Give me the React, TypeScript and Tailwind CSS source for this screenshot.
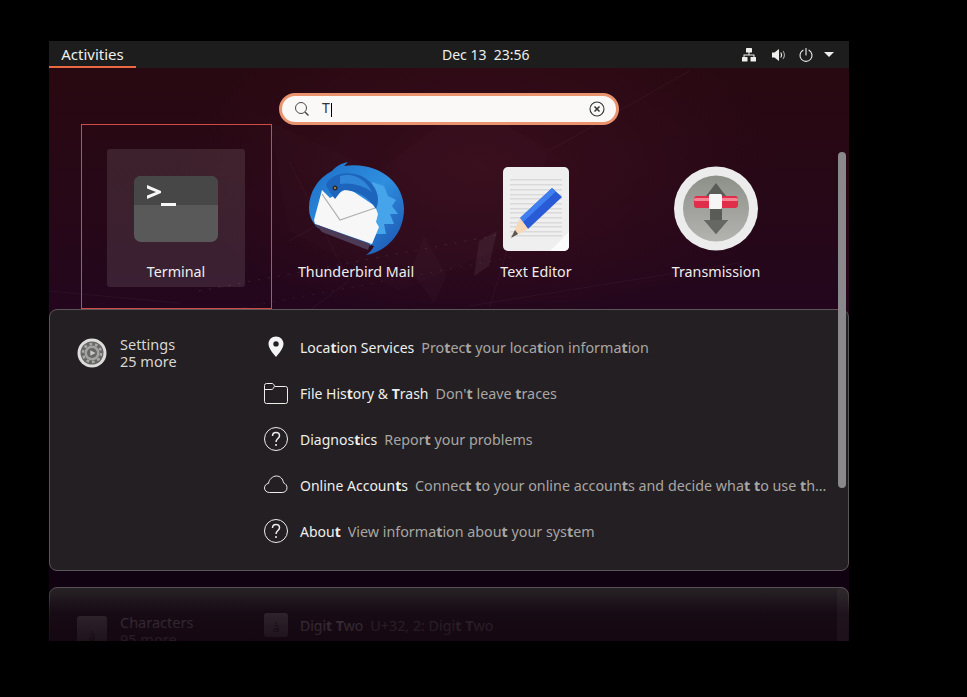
import React from "react";

const FONT = "font-['Noto_Sans','Open_Sans',sans-serif]";

// bolds the search term inside a result, as the shell does
const highlight = (text: string) =>
  text.split(/([tT])/).map((part, i) =>
    /^[tT]$/.test(part) ? (
      <b key={i} className="font-bold">
        {part}
      </b>
    ) : (
      part
    )
  );

const Wallpaper = () => (
  <svg className="absolute inset-0" width="800" height="600" viewBox="0 0 800 600" fill="none">
    <path d="M220 80 L330 130 L420 60 L500 110 L470 200 L350 250 L240 190 Z" fill="#ffffff" fillOpacity="0.012" />
    <path d="M375 195 L398 235 L385 262 L362 230 Z" fill="#ffffff" fillOpacity="0.018" />
    <path d="M430 200 L448 190 L440 225 L425 235 Z" fill="#ffffff" fillOpacity="0.06" />
    <g stroke="#ffffff" strokeOpacity="0.04">
      <path d="M0 250 L130 262 M240 120 L300 240 L260 270 M470 170 L440 268 M420 265 L690 222 M500 110 L640 30 M330 150 L240 200" />
    </g>
    <path d="M150 250 L470 190" stroke="#ffffff" strokeOpacity="0.1" strokeDasharray="2 8" />
    <path d="M165 272 L470 215" stroke="#ffffff" strokeOpacity="0.07" strokeDasharray="2 8" />
  </svg>
);

const NetworkIcon = () => (
  <svg width="16" height="16" viewBox="0 0 16 16" fill="#eeeeec">
    <rect x="5" y="1" width="6" height="4.500" rx="0.500" />
    <rect x="1" y="10" width="5.500" height="4.500" rx="0.500" />
    <rect x="9.500" y="10" width="5.500" height="4.500" rx="0.500" />
    <path d="M7.500 5h1v2.500h5V11h-1V8.500h-9V11h-1V7.500h5z" />
  </svg>
);

const VolumeIcon = () => (
  <svg width="16" height="16" viewBox="0 0 16 16" fill="none">
    <path d="M1 5.500h2.500L8 2v12l-4.500-3.500H1z" fill="#eeeeec" />
    <path d="M10 6c.8 1.300.8 2.700 0 4" stroke="#eeeeec" strokeWidth="1.200" strokeLinecap="round" />
    <path d="M12.300 4.500c1.500 2.200 1.500 4.800 0 7" stroke="#eeeeec" strokeOpacity="0.6" strokeWidth="1.200" strokeLinecap="round" />
  </svg>
);

const PowerIcon = () => (
  <svg width="16" height="16" viewBox="0 0 16 16" fill="none" stroke="#eeeeec" strokeWidth="1.100" strokeLinecap="round">
    <path d="M8 1.500v6.500" />
    <path d="M5 3.200a6 6 0 1 0 6 0" />
  </svg>
);

const TerminalIcon = () => (
  <svg width="96" height="96" viewBox="0 0 96 96">
    <rect x="6" y="14" width="84" height="66" rx="7" fill="#595959" />
    <path d="M6 21a7 7 0 0 1 7-7h70a7 7 0 0 1 7 7v22H6z" fill="#474747" />
    <path d="M19 23 L33 29 V31 L19 37 V33.500 L28 30 L19 26.500Z" fill="#f7f7f7" />
    <rect x="33" y="41" width="15" height="3" fill="#f7f7f7" />
  </svg>
);

const ThunderbirdIcon = () => (
  <svg width="96" height="96" viewBox="0 0 96 96">
    <defs>
      <linearGradient id="tb" x1="0" y1="0" x2="1" y2="1">
        <stop offset="0" stopColor="#1c6cc6" />
        <stop offset="0.5" stopColor="#2f8fdf" />
        <stop offset="1" stopColor="#1a50ad" />
      </linearGradient>
    </defs>
    {/* ring, open at the lower left */}
    <path
      d="M24 9 C28 4 34 1 40 0 C38 2 37 3 36 4 C70 -1 96 20 96 47 C96 72 78 90 58 93 C62 90 64 88 66 84 L10 66 C4 60 1 54 1 46 C1 30 10 16 24 9Z"
      fill="url(#tb)"
    />
    {/* jagged feathers */}
    <path
      d="M64 20 L76 24 L80 34 L88 38 L84 44 L90 52 L82 52 L86 62 L76 62 L78 72 L68 72 L62 84 L56 70 L66 46Z"
      fill="#46a5ea"
    />
    {/* envelope */}
    <path d="M14 28 L22 36 L40 26 L67 44 L70 52 L68 60 L71 65 L64 82 L7 62 L6 58Z" fill="#f7f7f7" />
    <path d="M14 32 L32 58 L67 46" fill="none" stroke="#b0b0b0" strokeWidth="1.300" />
    <path d="M7 62 L62 82 L60 88 L14 70Z" fill="#4d3a55" />
    {/* head and neck */}
    <path d="M18 23 C22 10 48 6 62 20 C70 28 72 38 68 47 C60 34 48 28 34 28 L27 37 C23 32 20 28 18 23Z" fill="#1d64bc" />
    <path d="M32 14 C46 10 58 18 64 30 C56 24 44 20 32 22Z" fill="#2f86d8" />
    <circle cx="27" cy="26" r="2.500" fill="#2b2b2b" />
    <circle cx="27" cy="26" r="1" fill="#b79a5a" />
  </svg>
);

const TextEditorIcon = () => (
  <svg width="96" height="96" viewBox="1 0 96 96">
    <rect x="16" y="5" width="66" height="84" rx="5" fill="#efefef" />
    <path d="M82 70 V84 a5 5 0 0 1 -5 5 H63z" fill="#fbfbfb" />
    <g fill="#dadada">
      {[17, 22, 27, 32, 36, 41, 46, 50, 55, 60, 64, 69, 73].map((y) => (
        <rect key={y} x="23" y={y} width="52" height="1.500" />
      ))}
    </g>
    <path d="M65 26 L75 35 L41 67 L33 56Z" fill="#2a5bd7" />
    <path d="M65 26 L69 29.500 L36 60 L33 56Z" fill="#3f7ff0" />
    <path d="M33 56 L41 67 L24 76 Z" fill="#f6d8b8" />
    <path d="M28 68 L31 72 L24 76Z" fill="#555555" />
  </svg>
);

const TransmissionIcon = () => (
  <svg width="96" height="96" viewBox="0 0 96 96">
    <defs>
      <linearGradient id="trg" x1="0" y1="0" x2="0" y2="1">
        <stop offset="0" stopColor="#8d8f89" />
        <stop offset="1" stopColor="#b3b4af" />
      </linearGradient>
    </defs>
    <circle cx="48" cy="46.500" r="42" fill="#ececec" />
    <circle cx="48" cy="46.500" r="33" fill="url(#trg)" />
    <path d="M48 21 L58 34 H54 V58 H60 L48 72 L36 58 H42 V34 H38Z" fill="#5a5c58" />
    <path d="M36 58 H60 L48 72Z" fill="#666864" />
    <rect x="26" y="34" width="44" height="12" rx="3" fill="#e02d49" />
    <rect x="26" y="36" width="44" height="3" rx="1.500" fill="#f28494" />
    <rect x="41" y="32" width="13" height="15" rx="1.500" fill="#f6f6f6" />
  </svg>
);

const SettingsIcon = () => (
  <svg width="30" height="30" viewBox="0 0 30 30">
    <circle cx="15" cy="15" r="14.500" fill="#dedddb" />
    <circle cx="15" cy="15" r="11.500" fill="#676765" />
    <circle cx="15" cy="15" r="9" fill="none" stroke="#a9a9a7" strokeWidth="2.500" strokeDasharray="2.800 2.850" />
    <circle cx="15" cy="15" r="7.500" fill="#a3a3a1" />
    <circle cx="15" cy="15" r="5" fill="#676765" />
    <path d="M13.300 12.300 L18.500 15 L13.300 17.700Z" fill="#c9c9c7" />
  </svg>
);

const PinIcon = () => (
  <svg width="24" height="24" viewBox="0 0 24 24">
    <path
      fillRule="evenodd"
      d="M12 1.500c-4.200 0-7.500 3.200-7.500 7.300C4.500 13.500 9 18.500 12 22c3-3.500 7.500-8.500 7.500-13.200 0-4.100-3.300-7.300-7.500-7.300zm0 4.700a2.700 2.700 0 1 1 0 5.400 2.700 2.700 0 0 1 0-5.400z"
      fill="#f4f4f4"
    />
  </svg>
);

const FolderIcon = () => (
  <svg width="24" height="24" viewBox="0 0 24 24" fill="none" stroke="#eeeeec" strokeWidth="1">
    <path d="M.5 4.500a2 2 0 0 1 2-2h5.500c1 0 1.500.5 2 1.500l.8 1.500H21.500a2 2 0 0 1 2 2V20.500a2 2 0 0 1-2 2h-19a2 2 0 0 1-2-2z" />
    <path d="M.5 8.500h6.500c1.500 0 2-.5 2.500-1.500l.8-1.500" />
  </svg>
);

const HelpIcon = () => (
  <svg width="24" height="24" viewBox="0 0 24 24" fill="none" stroke="#eeeeec" strokeWidth="1">
    <circle cx="12" cy="12" r="11.500" />
    <path d="M8.500 9c0-2 1.500-3.500 3.500-3.500s3.500 1.400 3.500 3.200c0 2.800-3.500 2.800-3.500 6.300" strokeWidth="1.500" />
    <circle cx="12" cy="18" r="1" fill="#eeeeec" stroke="none" />
  </svg>
);

const CloudIcon = () => (
  <svg width="24" height="24" viewBox="0 1 24 24" fill="none" stroke="#eeeeec" strokeWidth="1">
    <path d="M5.500 20.500C2.500 20.500.5 18.500.5 16c0-2.500 1.800-4.300 4-4.600C5 7.500 8.500 4 12.500 4c3.800 0 6.500 3 7 6.800 2 .8 3.500 2.600 3.500 5 0 2.800-2 4.700-4.800 4.700z" />
  </svg>
);

const SearchIcon = () => (
  <svg width="16" height="16" viewBox="0 0 16 16" fill="none" stroke="#4a4a4a">
    <circle cx="7" cy="7" r="5.500" strokeWidth="1" />
    <path d="M11 11l3.500 3.500" strokeWidth="1.500" />
  </svg>
);

const ClearIcon = () => (
  <svg width="16" height="16" viewBox="0 0 16 16" fill="none" stroke="#2e3436">
    <circle cx="8" cy="8" r="7" strokeWidth="1.100" />
    <path d="M5.500 5.500l5 5M10.500 5.500l-5 5" strokeWidth="1.500" />
  </svg>
);

const CharTile = ({ size }: { size: number }) => (
  <div
    className="flex items-end justify-center rounded-[3px] bg-gradient-to-b from-[#a0a0a0] to-[#8a8a8a] text-[12px] leading-[18px] text-[#444444]"
    style={{ width: size, height: size }}
  >
    à
  </div>
);

const apps = [
  { name: "Terminal", icon: <TerminalIcon /> },
  { name: "Thunderbird Mail", icon: <ThunderbirdIcon /> },
  { name: "Text Editor", icon: <TextEditorIcon /> },
  { name: "Transmission", icon: <TransmissionIcon /> },
];

const settingsRows = [
  { icon: <PinIcon />, title: "Location Services", desc: "Protect your location information" },
  { icon: <FolderIcon />, title: "File History & Trash", desc: "Don't leave traces" },
  { icon: <HelpIcon />, title: "Diagnostics", desc: "Report your problems" },
  { icon: <CloudIcon />, title: "Online Accounts", desc: "Connect to your online accounts and decide what to use them for" },
  { icon: <HelpIcon />, title: "About", desc: "View information about your system" },
];

const ResultRow = ({ icon, title, desc }: { icon: React.ReactNode; title: string; desc: string }) => (
  <div className="flex h-[46px] items-center">
    <div className="mr-3 flex-none">{icon}</div>
    <div className="flex min-w-0 flex-1 items-baseline pt-[2px]">
      <span className="flex-none text-[#eeeeec]">{highlight(title)}</span>
      <span className="ml-[7px] truncate text-[14.3px] text-[#a8a6a2]">{highlight(desc)}</span>
    </div>
  </div>
);

export default function App() {
  return (
    <div className={`h-[697px] w-[967px] overflow-hidden bg-black pl-[49px] pt-[41px] text-[14px] ${FONT}`}>
      <div className="relative flex h-[600px] w-[800px] flex-col overflow-hidden bg-[radial-gradient(ellipse_300px_160px_at_430px_125px,#380d1c_0%,#380d1c00_100%),linear-gradient(180deg,#290910_0%,#270813_15%,#25071c_40%,#1e0520_55%,#100210_90%)]">
        <Wallpaper />

        {/* top bar */}
        <header className="relative flex h-[27px] flex-none items-center bg-[#1d1d1d] text-[#eeeeec]">
          <div className="flex h-full w-[87px] items-center justify-center border-b-2 border-[#e9683f] pt-px text-[15px]">
            Activities
          </div>
          <div className="flex-1 pl-[306px]">Dec 13&nbsp; 23:56</div>
          <div className="flex items-center pr-[15px]">
            <NetworkIcon />
            <div className="ml-[14px]">
              <VolumeIcon />
            </div>
            <div className="ml-[11px]">
              <PowerIcon />
            </div>
            <div className="ml-[10px] h-0 w-0 border-x-[5px] border-t-[5px] border-x-transparent border-t-[#eeeeec]" />
          </div>
        </header>

        {/* search */}
        <div className="relative mt-[25px] flex flex-none justify-center">
          <div className="flex h-[32px] w-[340px] items-center rounded-full border-[3px] border-[#e9936f] bg-[#fbf9f7] pl-[12px] pr-[11px] text-[#333333]">
            <SearchIcon />
            <span className="ml-[12px] flex-1 leading-none">
              T<span className="ml-px inline-block h-[14px] w-px bg-black align-middle" />
            </span>
            <ClearIcon />
          </div>
        </div>

        {/* app grid */}
        <div className="relative flex h-[184px] flex-none pl-[37px] text-[14.3px] text-[#eeeeec]">
          {apps.map((app, i) => (
            <div key={app.name} className="relative flex w-[180px] flex-none justify-center pt-[24px]">
              <div
                className={`flex h-[138px] w-[138px] flex-none flex-col items-center rounded-[3px] pt-[13px] ${
                  i === 0 ? "bg-white/[0.1]" : ""
                }`}
              >
                {app.icon}
                <span className="mt-[3px] whitespace-nowrap">{app.name}</span>
              </div>
              {i === 0 && <div className="absolute -left-[5px] -top-px h-[185px] w-[191px] border border-[#cf4b43]" />}
            </div>
          ))}
        </div>

        {/* search results */}
        <div className="relative flex flex-col gap-[16px]">
          <section className="flex h-[262px] flex-none rounded-[8px] border border-[#5b565a] bg-[#231f22] pt-[14px]">
            <div className="flex w-[214px] flex-none items-start pl-[27px] pt-[14px]">
              <SettingsIcon />
              <div className="ml-[13px] text-[14.5px] leading-[17px] text-[#d8d6d2]">
                <div className="-mt-[2px]">Settings</div>
                <div>25 more</div>
              </div>
            </div>
            <div className="min-w-0 flex-1 pr-[21px]">
              {settingsRows.map((row) => (
                <ResultRow key={row.title} {...row} />
              ))}
            </div>
          </section>

          <section className="flex h-[262px] flex-none rounded-[8px] border border-[#5b565a] bg-[#292528] pt-[14px]">
            <div className="flex w-[214px] flex-none items-start pl-[27px] pt-[14px]">
              <CharTile size={30} />
              <div className="ml-[13px] text-[14.5px] leading-[17px] text-[#d8d6d2]">
                <div className="-mt-[2px]">Characters</div>
                <div>95 more</div>
              </div>
            </div>
            <div className="min-w-0 flex-1 pr-[21px]">
              <ResultRow icon={<CharTile size={24} />} title="Digit Two" desc="U+32, 2: Digit Two" />
            </div>
          </section>
        </div>

        {/* fade at the bottom of the results */}
        <div className="absolute bottom-0 left-0 h-[56px] w-full bg-gradient-to-b from-[#12040f]/0 via-[#12040f]/80 to-[#12040f]/90" />

        {/* scrollbar */}
        <div className="absolute left-[788px] top-[546px] h-[54px] w-[11px] rounded-t-[6px] bg-white/[0.04]" />
        <div className="absolute left-[789px] top-[111px] h-[336px] w-[8px] rounded-full bg-[#8a888a]" />
      </div>
    </div>
  );
}
